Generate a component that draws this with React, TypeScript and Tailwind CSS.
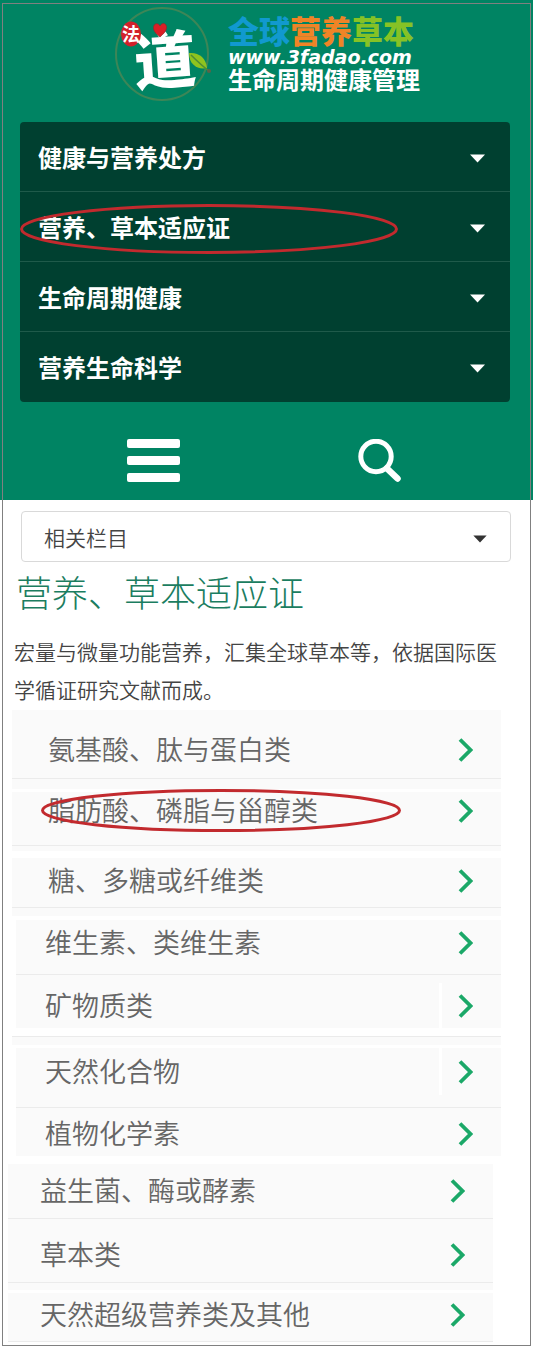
import React from 'react'

type Topic = {
  label: string
  row: string
  inset: string
  gap?: string
  strip?: string
  split?: boolean
  marked?: boolean
}

const MENU = [
  { label: '健康与营养处方' },
  { label: '营养、草本适应证', marked: true },
  { label: '生命周期健康' },
  { label: '营养生命科学' },
]

const WIDE = 'ml-3 mr-8 pl-9 pr-7'
const MID = 'ml-4 mr-8 pl-[29px] pr-7'
const NARROW = 'ml-2 mr-10 pl-8 pr-7'

const TOPICS: Topic[] = [
  { label: '氨基酸、肽与蛋白类', row: 'h-[69px] pt-3 border-b', inset: WIDE, strip: 'ml-3 mr-8 h-[10px] mb-[3px]' },
  { label: '脂肪酸、磷脂与甾醇类', row: 'h-[54px] pb-4 border-b', inset: WIDE, strip: 'ml-3 mr-8 h-[5px] mb-[7px]', marked: true },
  { label: '糖、多糖或纤维类', row: 'h-[50px] pb-1 border-b', inset: WIDE, strip: 'ml-3 mr-8 h-[8px] mb-[4px]' },
  { label: '维生素、类维生素', row: 'h-[55px] pb-2 border-b', inset: MID },
  { label: '矿物质类', row: 'h-[53px] pt-2', inset: MID, gap: 'mb-[8px]', strip: 'ml-3 mr-8 h-[9px] border-t mb-[3px]', split: true },
  { label: '天然化合物', row: 'h-[60px] pb-3 border-b', inset: MID, split: true },
  { label: '植物化学素', row: 'h-[48px] pt-1', inset: MID, gap: 'mb-[8px]' },
  { label: '益生菌、酶或酵素', row: 'h-[55px] border-b', inset: NARROW },
  { label: '草本类', row: 'h-[64px] pt-2 border-b', inset: NARROW, strip: 'ml-2 mr-10 h-[7px] mb-[3px]' },
  { label: '天然超级营养类及其他', row: 'h-[49px] pb-1 border-b', inset: NARROW },
]

function Caret({ className }: { className: string }) {
  return (
    <svg viewBox="0 0 15 9" className={className} aria-hidden="true">
      <path d="M0 0.5h15L7.5 8.5z" fill="currentColor" />
    </svg>
  )
}

function Ring({ className, rx, ry, color }: { className: string; rx: number; ry: number; color: string }) {
  return (
    <svg
      className={`pointer-events-none absolute z-10 ${className}`}
      viewBox={`0 0 ${rx * 2} ${ry * 2}`}
      aria-hidden="true"
    >
      <ellipse cx={rx} cy={ry} rx={rx - 1.5} ry={ry - 1.5} fill="none" stroke={color} strokeWidth="3" />
    </svg>
  )
}

function Emblem() {
  return (
    <svg viewBox="0 0 100 96" className="h-24 w-[100px] shrink-0 overflow-visible" role="img" aria-label="法道">
      <circle cx="50" cy="48" r="46" fill="none" stroke="#3d8657" strokeWidth="2" />
      <g transform="rotate(-4 53 56)">
        <text
          x="22"
          y="77"
          fontSize="62"
          fontWeight="900"
          fill="#fff"
          fontFamily="'Noto Sans CJK SC', sans-serif"
        >
          道
        </text>
      </g>
      <ellipse cx="19" cy="28" rx="10" ry="12.5" fill="#d3202a" />
      <text x="10" y="34.5" fontSize="18" fontWeight="700" fill="#fff" fontFamily="'Noto Sans CJK SC', sans-serif">
        法
      </text>
      <path
        d="M48 31C43 27 41.500 24.500 41.500 21.500C41.500 17 46.500 16.500 48 20C50 16 55 17 54.500 22C54 26 51 28 48 31z"
        fill="#dc1f26"
        stroke="#8f2b2c"
        strokeWidth="0.7"
      />
      <path d="M77 47C86 46 94 51 95 62C86 64 77 59 77 47z" fill="#8fc31f" />
      <path d="M79 49C84 54 89 59 97 65" stroke="#4e8d36" strokeWidth="1.500" fill="none" />
      <circle cx="97" cy="65" r="2" fill="#5c6249" />
    </svg>
  )
}

export default function App() {
  return (
    <div className="relative bg-white pb-[7px] font-['Noto_Sans_CJK_SC',sans-serif]">
      <header className="bg-[#008463]">
        <a href="#home" className="flex h-[122px] items-start gap-4 pt-[6px] pl-28">
          <Emblem />
          <span className="flex flex-col pt-1.5">
            <span className="text-[31px] leading-9 font-black whitespace-nowrap">
              <span className="text-[#1199cf]">全球</span>
              <span className="text-[#f08426]">营养</span>
              <span className="text-[#86c226]">草本</span>
            </span>
            <span className="pt-px font-['DejaVu_Sans',sans-serif] text-[19px] leading-4 font-bold whitespace-nowrap text-white italic">
              www.3fadao.com
            </span>
            <span className="text-2xl leading-7 font-bold whitespace-nowrap text-white">生命周期健康管理</span>
          </span>
        </a>

        <nav className="mr-[23px] ml-5 rounded bg-[#004030] pb-px">
          <ul>
            {MENU.map((item) => (
              <li key={item.label} className="relative border-b border-[#1f5a4a] last:border-b-0">
                <button
                  type="button"
                  className="flex h-[69px] w-full items-center justify-between pt-1 pr-[25px] pl-[18px] text-2xl font-bold text-white"
                >
                  <span className="pb-1">{item.label}</span>
                  <Caret className="h-[9px] w-[15px]" />
                </button>
                {item.marked && <Ring className="top-3 left-0 h-[50px] w-[378px]" rx={189} ry={25} color="#c22a2e" />}
              </li>
            ))}
          </ul>
        </nav>

        <div className="grid grid-cols-2 justify-items-center px-10 pt-[37px] pb-[17px]">
          <button type="button" aria-label="菜单" className="flex h-11 w-[53px] flex-col gap-2">
            <span className="h-[9px] w-full rounded-xs bg-white" />
            <span className="h-[9px] w-full rounded-xs bg-white" />
            <span className="h-[9px] w-full rounded-xs bg-white" />
          </button>
          <button type="button" aria-label="搜索" className="h-11 w-11">
            <svg viewBox="0 0 44 44" className="h-11 w-11" fill="none" stroke="#fff" aria-hidden="true">
              <circle cx="18" cy="17.500" r="15.200" strokeWidth="5" />
              <path d="M29 29.500L39.500 39.500" strokeWidth="6.500" strokeLinecap="round" />
            </svg>
          </button>
        </div>
      </header>

      <main>
        <div className="relative mt-[11px] mr-[22px] ml-[21px]">
          <select
            aria-label="相关栏目"
            className="block h-[51px] w-full appearance-none rounded border border-[#d9d9d9] bg-white pt-0.5 pl-[22px] text-[21px] font-[350] text-[#444]"
          >
            <option>相关栏目</option>
          </select>
          <Caret className="pointer-events-none absolute top-6 right-6 h-2 w-[14px] text-[#333]" />
        </div>

        <h1 className="pl-4 text-4xl leading-[58px] font-light text-[#1b7d60]">营养、草本适应证</h1>
        <p className="mt-3 mr-[23px] mb-0.5 ml-[14px] text-[21px] leading-[38px] font-[350] text-[#444]">
          宏量与微量功能营养，汇集全球草本等，依据国际医学循证研究文献而成。
        </p>

        <ul>
          {TOPICS.map((topic) => (
            <li key={topic.label} className="relative">
              <a
                href="#topic"
                className={`flex items-stretch justify-between border-[#ebebeb] bg-[#fafafa] text-[27px] leading-9 font-[350] text-[#666] ${topic.row} ${topic.inset} ${topic.gap ?? ''}`}
              >
                <span className="self-center pb-0.5 whitespace-nowrap">{topic.label}</span>
                <span className={`flex items-center pl-4 ${topic.split ? 'border-l-3 border-white' : ''}`}>
                  <svg viewBox="0 0 15 24" className="h-6 w-[15px]" fill="none" stroke="#1ba868" aria-hidden="true">
                    <path d="M2 1.500L12.500 12L2 22.500" strokeWidth="3.800" />
                  </svg>
                </span>
              </a>
              {topic.strip && <div className={`border-[#ebebeb] bg-[#fafafa] ${topic.strip}`} />}
              {topic.marked && <Ring className="-top-[3px] left-[41px] h-[43px] w-[360px]" rx={180} ry={21.5} color="#c22a2e" />}
            </li>
          ))}
        </ul>
      </main>

      <div className="pointer-events-none absolute top-[3px] right-[2px] bottom-[3px] left-[2px] border border-[#808080]" />
    </div>
  )
}
